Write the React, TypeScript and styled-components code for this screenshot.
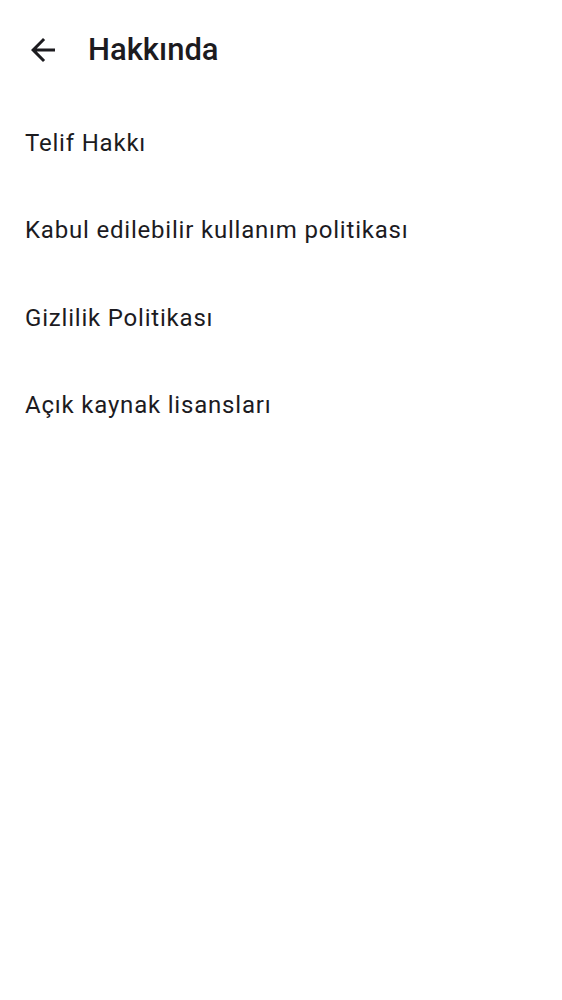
import React from "react";
import styled, { createGlobalStyle } from "styled-components";

const Global = createGlobalStyle`
  html, body { margin: 0; padding: 0; background: #ffffff; }
  body { font-family: Roboto, "Noto Sans", sans-serif; color: #1c1b1f; }
`;

const Screen = styled.div`
  width: 562px;
  min-height: 1000px;
  background: #ffffff;
  display: flex;
  flex-direction: column;
`;

const TopBar = styled.header`
  height: 99px;
  display: flex;
  align-items: center;
  padding-left: 25px;
  box-sizing: border-box;
`;

const BackButton = styled.button`
  width: 36px;
  height: 36px;
  padding: 0;
  border: none;
  background: transparent;
  display: flex;
  align-items: center;
  justify-content: center;
  margin-right: 27px;
  color: #1c1b1f;
`;

const Title = styled.h1`
  margin: 0;
  font-family: Roboto, sans-serif;
  font-weight: 500;
  font-size: 31px;
  color: #1c1b1f;
`;

const List = styled.ul`
  list-style: none;
  margin: 0;
  padding: 0;
  display: flex;
  flex-direction: column;
`;

const Item = styled.li`
  height: 87.5px;
  display: flex;
  align-items: center;
  padding-left: 25px;
  font-family: Roboto, sans-serif;
  font-size: 24px;
  letter-spacing: 0.8px;
  color: #1c1b1f;
`;

const items = [
  "Telif Hakkı",
  "Kabul edilebilir kullanım politikası",
  "Gizlilik Politikası",
  "Açık kaynak lisansları",
];

export default function App() {
  return (
    <Screen>
      <Global />
      <TopBar>
        <BackButton aria-label="Geri">
          <svg width="36" height="36" viewBox="0 0 24 24">
            <path d="M20 11H7.83l5.59-5.59L12 4l-8 8 8 8 1.41-1.41L7.83 13H20v-2z" fill="currentColor" />
          </svg>
        </BackButton>
        <Title>Hakkında</Title>
      </TopBar>
      <List>
        {items.map((t) => (
          <Item key={t}>{t}</Item>
        ))}
      </List>
    </Screen>
  );
}
